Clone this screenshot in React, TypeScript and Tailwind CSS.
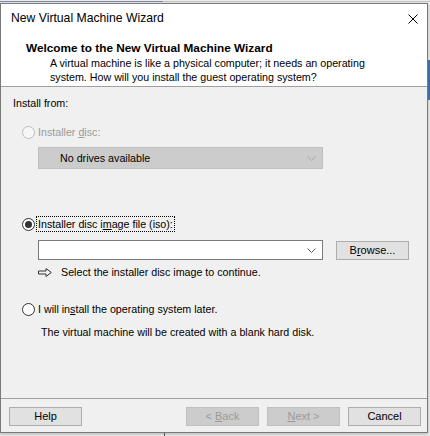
import React from "react";

function Radio({ checked = false, disabled = false }: { checked?: boolean; disabled?: boolean }) {
  return (
    <span
      className={
        "flex h-[13px] w-[13px] shrink-0 items-center justify-center rounded-full border " +
        (disabled ? "border-[#bcbcbc] bg-[#f7f7f7]" : "border-[#333333] bg-white")
      }
    >
      {checked && <span className="h-[7px] w-[7px] rounded-full bg-[#333333]" />}
    </span>
  );
}

function Chevron({ color }: { color: string }) {
  return (
    <svg width="9" height="5" viewBox="0 0 9 5" className="shrink-0">
      <path d="M0.5 0.5 L4.5 4.5 L8.5 0.5" fill="none" stroke={color} strokeWidth="1" />
    </svg>
  );
}

function Button({ children, disabled = false }: { children: React.ReactNode; disabled?: boolean }) {
  return (
    <div
      className={
        "flex h-[19px] w-[73px] items-center justify-center border text-[11px] leading-none " +
        (disabled ? "border-[#bfbfbf] bg-[#cccccc] text-[#9a9a9a]" : "border-[#adadad] bg-[#e1e1e1] text-black")
      }
    >
      <span className="whitespace-pre">{children}</span>
    </div>
  );
}

export default function App() {
  return (
    <div className="relative h-[436px] w-[430px] overflow-hidden bg-[#ececec] font-['Liberation_Sans',Arial,sans-serif] text-black">
      {/* bits of the windows behind */}
      <div className="absolute left-0 top-[1px] h-[1px] w-[163px] bg-[#7b86a0]" />
      <div className="absolute left-[163px] top-[1px] h-[1px] w-[267px] bg-[#c4c4c4]" />
      <div className="absolute left-[164px] top-[433px] h-[3px] w-[1px] bg-[#555555]" />
      <div className="absolute left-[428px] top-[60px] h-[40px] w-[2px] bg-[#3a6ea5]" />

      {/* dialog window */}
      <div className="mt-[3px] flex h-[430px] w-[428px] flex-col border border-[#7a7a7a] bg-[#f0f0f0] shadow-[0_1px_3px_rgba(0,0,0,0.25)]">
        {/* title bar + header */}
        <div className="flex flex-col border-b border-[#a0a0a0] bg-white">
          <div className="flex h-[29px] items-center justify-between pl-[10px] pr-[9px]">
            <span className="text-[12.2px] leading-none">New Virtual Machine Wizard</span>
            <svg width="10" height="10" viewBox="0 0 10 10">
              <path d="M0.5 0.5 L9.5 9.5 M9.5 0.5 L0.5 9.5" stroke="#000" strokeWidth="1" />
            </svg>
          </div>
          <div className="flex flex-col pb-[2px] pt-[8px]">
            <div className="pl-[25px] text-[11.8px] font-bold leading-[14px]">
              Welcome to the New Virtual Machine Wizard
            </div>
            <div className="mt-[1px] pl-[49px] text-[10.7px] leading-[14px]">
              A virtual machine is like a physical computer; it needs an operating
              <br />
              system. How will you install the guest operating system?
            </div>
          </div>
        </div>

        {/* body */}
        <div className="flex flex-1 flex-col text-[10.7px] leading-[14px]">
          <div className="ml-[12px] mt-[9px]">Install from:</div>

          <div className="ml-[21px] mt-[15px] flex h-[14px] items-center gap-[3px]">
            <Radio disabled />
            <span className="text-[#9a9a9a]">
              Installer <span className="underline">d</span>isc:
            </span>
          </div>

          <div className="ml-[37px] mt-[8px] flex h-[22px] w-[285px] items-center justify-between border border-[#bfbfbf] bg-[#cccccc] pl-[21px] pr-[6px]">
            <span>No drives available</span>
            <Chevron color="#a8a8a8" />
          </div>

          <div className="ml-[21px] mt-[48px] flex h-[14px] items-center gap-[2px]">
            <Radio checked />
            <span className="px-[1px] outline outline-1 outline-dotted outline-black">
              Installer disc i<span className="underline">m</span>age file (iso):
            </span>
          </div>

          <div className="ml-[37px] mt-[9px] flex items-center gap-[13px]">
            <div className="flex h-[20px] w-[285px] items-center justify-end border border-[#7a7a7a] bg-white pr-[6px]">
              <Chevron color="#555555" />
            </div>
            <Button>
              B<span className="underline">r</span>owse...
            </Button>
          </div>

          <div className="ml-[37px] mt-[5px] flex h-[14px] items-center gap-[9px]">
            <svg width="14" height="9" viewBox="0 0 14 9" className="shrink-0">
              <path d="M0.5 3 H8 V0.5 L13.3 4.5 L8 8.5 V6 H0.5 Z" fill="none" stroke="#333" strokeWidth="1" strokeLinejoin="miter" />
            </svg>
            <span>Select the installer disc image to continue.</span>
          </div>

          <div className="ml-[21px] mt-[23px] flex h-[14px] items-center gap-[3px]">
            <Radio />
            <span>
              I will in<span className="underline">s</span>tall the operating system later.
            </span>
          </div>

          <div className="ml-[40px] mt-[9px]">The virtual machine will be created with a blank hard disk.</div>
        </div>

        {/* footer */}
        <div className="flex items-start justify-between border-t border-[#a0a0a0] pb-[6px] pl-[8px] pr-[6px] pt-[8px]">
          <Button>Help</Button>
          <div className="flex gap-[8px]">
            <Button disabled>
              {"< "}
              <span className="underline">B</span>ack
            </Button>
            <Button disabled>
              <span className="underline">N</span>
              {"ext >"}
            </Button>
            <Button>Cancel</Button>
          </div>
        </div>
      </div>
    </div>
  );
}
